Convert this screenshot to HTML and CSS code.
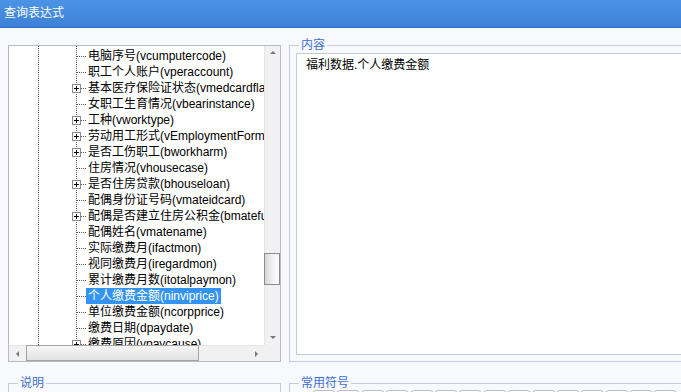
FILE: index.html
```html
<!DOCTYPE html>
<html lang="zh-CN">
<head>
    <meta charset="UTF-8">
    <title>查询表达式</title>
    <link rel="stylesheet" href="styles.css">
</head>
<body>
    <div class="window">
        <div class="titlebar">查询表达式</div>

        <div class="main">
            <div class="tree-box">
                <div class="tree-view">
                    <ul class="tree">
                        <li class="node"><span class="dash leaf"></span><span class="label">电脑序号(vcumputercode)</span></li>
                        <li class="node"><span class="dash leaf"></span><span class="label">职工个人账户(vperaccount)</span></li>
                        <li class="node"><span class="plus"></span><span class="dash"></span><span class="label">基本医疗保险证状态(vmedcardflag)</span></li>
                        <li class="node"><span class="dash leaf"></span><span class="label">女职工生育情况(vbearinstance)</span></li>
                        <li class="node"><span class="plus"></span><span class="dash"></span><span class="label">工种(vworktype)</span></li>
                        <li class="node"><span class="plus"></span><span class="dash"></span><span class="label">劳动用工形式(vEmploymentForm)</span></li>
                        <li class="node"><span class="plus"></span><span class="dash"></span><span class="label">是否工伤职工(bworkharm)</span></li>
                        <li class="node"><span class="dash leaf"></span><span class="label">住房情况(vhousecase)</span></li>
                        <li class="node"><span class="plus"></span><span class="dash"></span><span class="label">是否住房贷款(bhouseloan)</span></li>
                        <li class="node"><span class="dash leaf"></span><span class="label">配偶身份证号码(vmateidcard)</span></li>
                        <li class="node"><span class="plus"></span><span class="dash"></span><span class="label">配偶是否建立住房公积金(bmatefund)</span></li>
                        <li class="node"><span class="dash leaf"></span><span class="label">配偶姓名(vmatename)</span></li>
                        <li class="node"><span class="dash leaf"></span><span class="label">实际缴费月(ifactmon)</span></li>
                        <li class="node"><span class="dash leaf"></span><span class="label">视同缴费月(iregardmon)</span></li>
                        <li class="node"><span class="dash leaf"></span><span class="label">累计缴费月数(itotalpaymon)</span></li>
                        <li class="node"><span class="dash leaf"></span><span class="label selected">个人缴费金额(ninviprice)</span></li>
                        <li class="node"><span class="dash leaf"></span><span class="label">单位缴费金额(ncorpprice)</span></li>
                        <li class="node"><span class="dash leaf"></span><span class="label">缴费日期(dpaydate)</span></li>
                        <li class="node"><span class="plus"></span><span class="dash"></span><span class="label">缴费原因(vpaycause)</span></li>
                    </ul>
                </div>
                <div class="vscroll">
                    <div class="arrow-btn"><span class="tri up"></span></div>
                    <div class="vtrack"><div class="vthumb"></div></div>
                    <div class="arrow-btn"><span class="tri down"></span></div>
                </div>
                <div class="hscroll">
                    <div class="arrow-btn"><span class="tri left"></span></div>
                    <div class="htrack"><div class="hthumb"></div></div>
                    <div class="arrow-btn"><span class="tri right"></span></div>
                </div>
                <div class="corner"></div>
            </div>

            <fieldset class="group content-group">
                <legend>内容</legend>
                <div class="editor">福利数据.个人缴费金额</div>
            </fieldset>

            <fieldset class="group lower">
                <legend>说明</legend>
            </fieldset>

            <fieldset class="group lower symbols">
                <legend>常用符号</legend>
                <div class="sym-row">
                    <span class="sym"></span><span class="sym"></span><span class="sym"></span><span class="sym"></span>
                    <span class="sym"></span><span class="sym"></span><span class="sym"></span><span class="sym"></span>
                    <span class="sym"></span><span class="sym"></span><span class="sym"></span><span class="sym"></span>
                    <span class="sym"></span><span class="sym"></span><span class="sym"></span>
                </div>
            </fieldset>
        </div>
    </div>
</body>
</html>
```

FILE: styles.css
```css
html, body {
    margin: 0;
    padding: 0;
}
body {
    width: 681px;
    height: 392px;
    overflow: hidden;
    background-color: #f7f9fc;
    font-family: "Liberation Sans", "Noto Sans CJK SC", sans-serif;
    font-size: 12px;
    color: #000;
}
.window {
    width: 800px;
}

/* --- 标题栏 --- */
.titlebar {
    height: 27px;
    line-height: 26px;
    padding-left: 4px;
    color: #fff;
    background: linear-gradient(#4b94e5, #3e81d8);
    border-bottom: 1px solid #2f6bc2;
}

/* --- 主体 --- */
.main {
    display: grid;
    grid-template-columns: 273px 1fr;
    grid-template-rows: 317px 60px;
    column-gap: 8px;
    row-gap: 14px;
    padding: 17px 0 0 8px;
}

/* --- 字段树 --- */
.tree-box {
    display: grid;
    grid-template-columns: 1fr 16px;
    grid-template-rows: 1fr 16px;
    border: 1px solid #b5bac3;
    background-color: #fff;
    overflow: hidden;
}
.tree-view {
    overflow: hidden;
    padding-top: 2px;
    background-image:
        linear-gradient(#555 50%, transparent 50%),
        linear-gradient(#555 50%, transparent 50%);
    background-size: 1px 2px;
    background-repeat: repeat-y;
    background-position: 29px 0, 67px 0;
}
.tree {
    list-style: none;
    margin: 0;
    padding: 0;
}
.node {
    display: flex;
    align-items: center;
    height: 16px;
    padding-left: 63px;
    white-space: nowrap;
}
.plus {
    width: 7px;
    height: 7px;
    flex: none;
    border: 1px solid #8a8a8a;
    background:
        linear-gradient(#000, #000) center / 5px 1px no-repeat,
        linear-gradient(#000, #000) center / 1px 5px no-repeat,
        #fff;
}
.dash {
    width: 5px;
    height: 1px;
    flex: none;
    background: linear-gradient(to right, #555 50%, transparent 50%) 0 0 / 2px 1px repeat-x;
}
.dash.leaf {
    width: 9px;
    margin-left: 5px;
}
.label {
    padding: 0 2px;
    line-height: 16px;
}
.label.selected {
    background-color: #3393f2;
    color: #fff;
}

/* --- 滚动条 --- */
.vscroll, .hscroll {
    display: flex;
    background: #f1f1f1;
}
.vscroll {
    flex-direction: column;
    border-left: 1px solid #e4e4e4;
}
.hscroll {
    border-top: 1px solid #e4e4e4;
}
.arrow-btn {
    width: 16px;
    height: 16px;
    flex: none;
    display: flex;
    justify-content: center;
    align-items: center;
}
.vtrack, .htrack {
    flex: 1;
}
.vthumb {
    margin-top: 191px;
    height: 30px;
    margin-left: -1px;
    border: 1px solid #8c8c8c;
    background: linear-gradient(to right, #d6d6d6, #f4f4f4 60%, #fafafa);
}
.hthumb {
    margin-left: 1px;
    width: 171px;
    height: 14px;
    margin-top: -1px;
    border: 1px solid #a4a4a4;
    background: linear-gradient(#f6f6f6, #e2e2e2);
}
.tri {
    width: 0;
    height: 0;
}
.tri.up {
    border: 3px solid transparent;
    border-top: 0;
    border-bottom: 3px solid #777;
    margin-bottom: 4px;
}
.tri.down {
    border: 3px solid transparent;
    border-bottom: 0;
    border-top: 3px solid #777;
}
.tri.left {
    border: 3px solid transparent;
    border-left: 0;
    border-right: 3px solid #777;
}
.tri.right {
    border: 3px solid transparent;
    border-right: 0;
    border-left: 3px solid #777;
}
.corner {
    background: #f1f1f1;
}

/* --- 分组框 --- */
.group {
    margin: 0;
    padding: 1px 6px 6px 6px;
    border: 1px solid #c6cdd9;
    min-width: 0;
}
.group legend {
    margin-left: 3px;
    padding: 0 2px;
    line-height: 14px;
    color: #3c6fd3;
}
.content-group {
    margin-top: -7px;
    display: flex;
    flex-direction: column;
}
.editor {
    flex: 1;
    background-color: #fff;
    border: 1px solid #c4cad5;
    padding: 4px 9px;
    line-height: 14px;
}
.lower {
    padding-top: 0;
}
.sym-row {
    display: flex;
    margin-left: 16px;
}
.sym {
    width: 22px;
    height: 22px;
    flex: none;
    border: 1px solid #b9bec7;
    border-radius: 4px;
    background: linear-gradient(#fff, #eef1f5);
    margin-right: 0.4px;
}
```
